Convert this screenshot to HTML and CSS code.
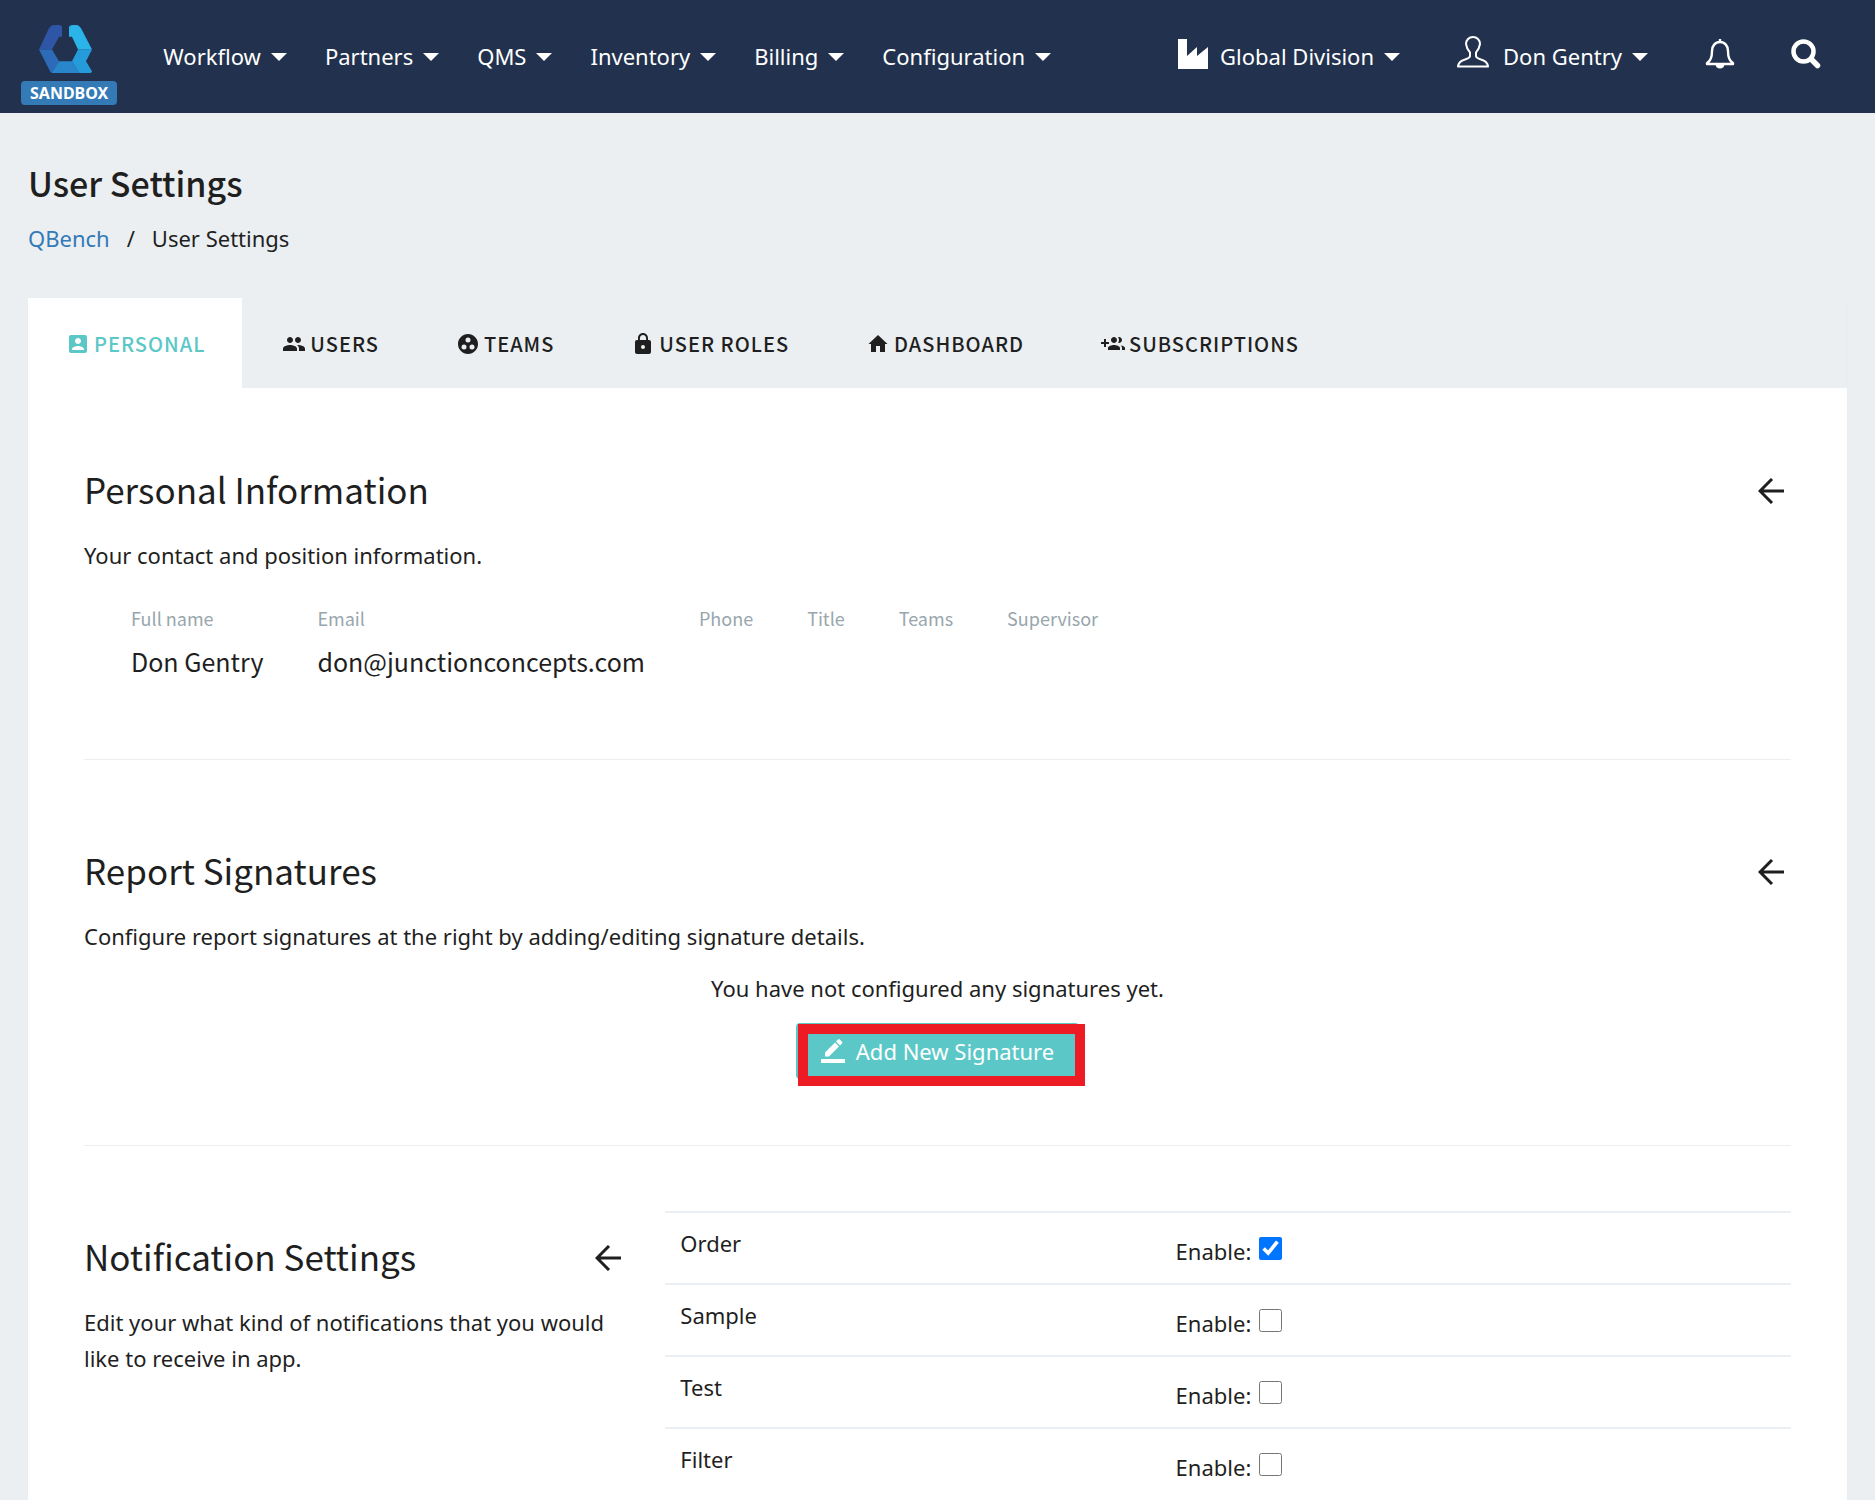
FILE: index.html
```html
<!DOCTYPE html>
<html lang="en">
<head>
<meta charset="utf-8">
<meta name="viewport" content="width=device-width, initial-scale=1">
<title>User Settings - QBench</title>
<link rel="stylesheet" href="styles.css">
</head>
<body>
<header class="topbar">
  <a class="brand" href="#" aria-label="QBench home">
    <svg class="brand-logo" viewBox="0 0 53 57" preserveAspectRatio="none" aria-hidden="true">
      <path fill="#2f56a6" d="M15 0h5q3 0 3 3v11h-3l-7 15H0L10 4q2-4 5-4z"/>
      <path fill="#2d6bb8" d="M0 29h13l7 14-6 14h-1q-1 0-2-2z"/>
      <path fill="#2a86cb" d="M20 43h13l7 14H13z"/>
      <path fill="#259bdb" d="M39 29h14l-6 14 6 12q0 2-2 2H40l-7-14z"/>
      <path fill="#2bb4ea" d="M30 3q0-3 4-3h3q3 0 5 4l11 25H39l-6-15h-3z"/>
    </svg>
    <span class="brand-badge">SANDBOX</span>
  </a>
  <nav class="menu" aria-label="Main">
    <button class="menu-item" type="button">Workflow<span class="caret"></span></button>
    <button class="menu-item" type="button">Partners<span class="caret"></span></button>
    <button class="menu-item" type="button">QMS<span class="caret"></span></button>
    <button class="menu-item" type="button">Inventory<span class="caret"></span></button>
    <button class="menu-item" type="button">Billing<span class="caret"></span></button>
    <button class="menu-item" type="button">Configuration<span class="caret"></span></button>
  </nav>
  <div class="tools">
    <button class="menu-item division" type="button">
      <svg class="tool-icon" viewBox="0 0 30 30" aria-hidden="true"><path fill="#fff" d="M0 0h9v17L19 8v9l11-9v22H0z"/></svg>
      Global Division<span class="caret"></span>
    </button>
    <button class="menu-item account" type="button">
      <svg class="tool-icon user-icon" viewBox="0 0 32 32" aria-hidden="true"><path fill="none" stroke="#fff" stroke-width="2" stroke-linejoin="round" d="M13 16.500C10.500 14 9.500 11 9 8c0-4 3-7 7-7s7 3 7 7c-.5 3-1.500 6-4 8.500V20c0 2 2 2.500 5 3.500 4 1 6.500 3 7 7H1c.5-4 3-6 7-7 3-1 5-1.500 5-3.500z"/></svg>
      Don Gentry<span class="caret"></span>
    </button>
    <button class="menu-item" type="button" aria-label="Notifications">
      <svg class="tool-icon" viewBox="0 0 30 30" aria-hidden="true"><path fill="none" stroke="#fff" stroke-width="2.400" stroke-linejoin="round" d="M15 0v3M15 3c-5 0-8 4-8 9 0 6-1 10-5 12v1h26v-1c-4-2-5-6-5-12 0-5-3-9-8-9z"/><path fill="#fff" d="M10.500 25h9c0 6-9 6-9 0z"/></svg>
    </button>
    <button class="menu-item search" type="button" aria-label="Search">
      <svg class="tool-icon" viewBox="0 0 30 30" aria-hidden="true"><circle cx="12.500" cy="12.500" r="10" fill="none" stroke="#fff" stroke-width="4.500"/><path stroke="#fff" stroke-width="5.500" stroke-linecap="round" d="M20.500 20.500l6 6"/></svg>
    </button>
  </div>
</header>

<main class="page">
  <h1 class="page-title">User Settings</h1>
  <nav class="breadcrumb" aria-label="Breadcrumb">
    <a href="#">QBench</a><span>/</span><span>User Settings</span>
  </nav>

  <div class="panel">
    <nav class="tabs" aria-label="Settings">
      <a class="tab tab-active" href="#" aria-current="page"><svg class="tab-icon" viewBox="0 0 24 24" aria-hidden="true"><path d="M3 5v14a2 2 0 0 0 2 2h14c1.100 0 2-.9 2-2V5a2 2 0 0 0-2-2H5a2 2 0 0 0-2 2zm12 4c0 1.660-1.340 3-3 3s-3-1.340-3-3 1.340-3 3-3 3 1.340 3 3zm-9 8c0-2 4-3.100 6-3.100s6 1.100 6 3.100v1H6v-1z"/></svg>PERSONAL</a>
      <a class="tab" href="#"><svg class="tab-icon" viewBox="0 0 24 24" aria-hidden="true"><path d="M16 11c1.660 0 2.990-1.340 2.990-3S17.660 5 16 5s-3 1.340-3 3 1.340 3 3 3zm-8 0c1.660 0 2.990-1.340 2.990-3S9.660 5 8 5 5 6.340 5 8s1.340 3 3 3zm0 2c-2.330 0-7 1.170-7 3.500V19h14v-2.500c0-2.330-4.670-3.500-7-3.500zm8 0c-.29 0-.62.020-.97.050 1.160.84 1.970 1.970 1.970 3.450V19h6v-2.500c0-2.330-4.670-3.500-7-3.500z"/></svg>USERS</a>
      <a class="tab" href="#"><svg class="tab-icon" viewBox="0 0 24 24" aria-hidden="true"><path d="M12 2C6.480 2 2 6.480 2 12s4.480 10 10 10 10-4.480 10-10S17.520 2 12 2zM8 17.500a2.500 2.500 0 0 1 0-5 2.500 2.500 0 0 1 0 5zM9.500 8a2.500 2.500 0 0 1 5 0 2.500 2.500 0 0 1-5 0zm6.500 9.500a2.500 2.500 0 0 1 0-5 2.500 2.500 0 0 1 0 5z"/></svg>TEAMS</a>
      <a class="tab" href="#"><svg class="tab-icon" viewBox="0 0 24 24" aria-hidden="true"><path d="M18 8h-1V6c0-2.760-2.240-5-5-5S7 3.240 7 6v2H6c-1.100 0-2 .9-2 2v10c0 1.100.9 2 2 2h12c1.100 0 2-.9 2-2V10c0-1.100-.9-2-2-2zm-6 9c-1.100 0-2-.9-2-2s.9-2 2-2 2 .9 2 2-.9 2-2 2zM15.100 8H8.900V6c0-1.710 1.390-3.100 3.100-3.100s3.100 1.390 3.100 3.100z"/></svg>USER ROLES</a>
      <a class="tab" href="#"><svg class="tab-icon" viewBox="0 0 24 24" aria-hidden="true"><path d="M12 3L2.500 12H5v8h5v-6h4v6h5v-8h2.500z"/></svg>DASHBOARD</a>
      <a class="tab" href="#"><svg class="tab-icon" viewBox="0 0 24 24" aria-hidden="true"><path d="M8 10H5V7H3v3H0v2h3v3h2v-3h3zm10 1c1.660 0 2.990-1.340 2.990-3S19.660 5 18 5c-.32 0-.63.050-.91.140.57.810.9 1.790.9 2.860s-.34 2.040-.9 2.860c.28.090.59.140.91.140zm-5 0c1.660 0 2.990-1.340 2.990-3S14.660 5 13 5s-3 1.340-3 3 1.340 3 3 3zm6.620 2.160c.83.730 1.380 1.660 1.380 2.840v2h3v-2c0-1.540-2.370-2.490-4.380-2.840zM13 13c-2 0-6 1-6 3v2h12v-2c0-2-4-3-6-3z"/></svg>SUBSCRIPTIONS</a>
    </nav>

    <section class="section section-first">
      <div class="section-head">
        <h2>Personal Information</h2>
        <button class="collapse" type="button" aria-label="Collapse personal information"><svg viewBox="0 0 26 26" aria-hidden="true"><path d="M26 13H3M14 1L2 13l12 12"/></svg></button>
      </div>
      <p>Your contact and position information.</p>
      <table class="profile">
        <thead><tr><th>Full name</th><th>Email</th><th>Phone</th><th>Title</th><th>Teams</th><th>Supervisor</th></tr></thead>
        <tbody><tr><td>Don Gentry</td><td>don@junctionconcepts.com</td><td></td><td></td><td></td><td></td></tr></tbody>
      </table>
    </section>

    <section class="section section-signatures">
      <div class="section-head">
        <h2>Report Signatures</h2>
        <button class="collapse" type="button" aria-label="Collapse report signatures"><svg viewBox="0 0 26 26" aria-hidden="true"><path d="M26 13H3M14 1L2 13l12 12"/></svg></button>
      </div>
      <p>Configure report signatures at the right by adding/editing signature details.</p>
      <div class="empty">
        <p>You have not configured any signatures yet.</p>
        <div class="callout">
          <button class="add-button" type="button"><svg viewBox="0 0 24 24" aria-hidden="true"><path d="M0 20h24v4H0zM4 17.500v-4L14 3.500l4 4L8 17.500zM15 2.500L17 .5a1.300 1.300 0 0 1 1.800 0l2.200 2.200a1.300 1.300 0 0 1 0 1.800l-2 2z"/></svg>Add New Signature</button>
        </div>
      </div>
    </section>

    <section class="section section-notify">
      <div class="notify-intro">
        <div class="section-head">
          <h2>Notification Settings</h2>
          <button class="collapse" type="button" aria-label="Collapse notification settings"><svg viewBox="0 0 26 26" aria-hidden="true"><path d="M26 13H3M14 1L2 13l12 12"/></svg></button>
        </div>
        <p>Edit your what kind of notifications that you would like to receive in app.</p>
      </div>
      <table class="notify-table">
        <tbody>
          <tr><td>Order</td><td><label for="n-order">Enable:</label><input id="n-order" type="checkbox" checked></td></tr>
          <tr><td>Sample</td><td><label for="n-sample">Enable:</label><input id="n-sample" type="checkbox"></td></tr>
          <tr><td>Test</td><td><label for="n-test">Enable:</label><input id="n-test" type="checkbox"></td></tr>
          <tr><td>Filter</td><td><label for="n-filter">Enable:</label><input id="n-filter" type="checkbox"></td></tr>
        </tbody>
      </table>
    </section>
  </div>
</main>
</body>
</html>
```
FILE: styles.css
```css
* {
  box-sizing: border-box;
}

body {
  margin: 0;
  min-height: 100vh;
  display: flex;
  flex-direction: column;
  background: #ebeff2;
  color: #1f1f1f;
  font-family: "Noto Sans", sans-serif;
  font-size: 22px;
  line-height: 36px;
}

h1, h2, p {
  margin: 0;
}

button {
  border: 0;
  padding: 0;
  background: none;
  color: inherit;
  font: inherit;
  cursor: pointer;
}

/* Top bar */
.topbar {
  display: flex;
  align-items: center;
  height: 113px;
  padding: 0 54px 2px 21px;
  background: #22324e;
  color: #fff;
}

.brand {
  display: flex;
  flex-direction: column;
  align-items: center;
  gap: 8px;
  margin-right: 46px;
  padding-top: 19px;
  color: #fff;
  text-decoration: none;
}

.brand-logo {
  width: 53px;
  height: 48px;
  margin-right: 8px;
}

.brand-badge {
  padding: 0 9px;
  border-radius: 4px;
  background: #337ab7;
  font-size: 16px;
  font-weight: 700;
  line-height: 24px;
}

.menu,
.tools {
  display: flex;
  align-items: center;
}

.menu {
  gap: 38px;
}

.tools {
  margin-left: auto;
}

.menu-item {
  display: flex;
  align-items: center;
  white-space: nowrap;
}

.caret {
  margin: 3px 0 0 10px;
  border: 8px solid transparent;
  border-top-color: #fff;
  border-bottom: 0;
}

.tool-icon {
  width: 30px;
  height: 30px;
  margin-bottom: 4px;
}

.division .tool-icon {
  margin-right: 12px;
}

.account {
  margin: 0 57px;
}

.account .user-icon {
  width: 32px;
  height: 32px;
  margin: 0 14px 8px 0;
}

.search {
  margin-left: 56px;
}

/* Page heading */
.page {
  flex: 1;
  display: flex;
  flex-direction: column;
  padding: 47px 28px 0;
}

.page-title {
  font-family: "Noto Sans CJK SC", "Noto Sans", sans-serif;
  font-size: 34px;
  font-weight: 500;
  line-height: 46px;
}

.breadcrumb {
  display: flex;
  gap: 17px;
  margin: 14px 0 42px;
}

.breadcrumb a {
  color: #337ab7;
  text-decoration: none;
}

/* Panel and tabs */
.panel {
  flex: 1;
  background: #fff;
  box-shadow: 0 1px 1px rgba(0, 0, 0, 0.05);
}

.tabs {
  display: flex;
  gap: 2px;
  background: #ebeff2;
}

.tab {
  display: flex;
  align-items: center;
  gap: 4px;
  height: 90px;
  padding: 2px 37px 0 38px;
  color: #1f1f1f;
  font-family: "Noto Sans CJK SC", "Noto Sans", sans-serif;
  font-size: 20px;
  font-weight: 500;
  letter-spacing: 1px;
  text-decoration: none;
}

.tab-active {
  background: #fff;
  color: #5bc8c7;
}

.tab-icon {
  width: 24px;
  height: 24px;
  fill: currentColor;
}

/* Sections */
.section {
  margin: 0 56px;
  border-bottom: 1px solid #eee;
}

.section-first {
  padding: 75px 0 80px;
}

.section-head {
  display: flex;
  align-items: center;
  justify-content: space-between;
  margin-bottom: 22px;
}

.section-head h2 {
  font-family: "Noto Sans CJK SC", "Noto Sans", sans-serif;
  font-size: 35px;
  font-weight: 400;
  line-height: 52px;
}

.collapse {
  display: flex;
  padding: 4px 7px 0;
}

.collapse svg {
  width: 26px;
  height: 26px;
  fill: none;
  stroke: #1f1f1f;
  stroke-width: 3;
}

.profile {
  margin: 31px 0 0 20px;
  border-collapse: collapse;
  font-family: "Noto Sans CJK SC", "Noto Sans", sans-serif;
  text-align: left;
}

.profile th {
  padding: 0 27px 11px;
  color: #98a6ad;
  font-size: 18px;
  font-weight: 400;
  line-height: 28px;
}

.profile td {
  padding: 0 27px;
  font-size: 25px;
}

.section-signatures {
  padding: 84px 0 66px;
}

.empty {
  display: flex;
  flex-direction: column;
  align-items: center;
  gap: 17px;
  margin-top: 16px;
}

.callout {
  position: relative;
}

/* Red frame that points out the button */
.callout::after {
  content: "";
  position: absolute;
  inset: 1px -6px -7px 2px;
  border: 10px solid #ed1c24;
  pointer-events: none;
}

.add-button {
  display: flex;
  align-items: center;
  gap: 11px;
  height: 56px;
  padding: 0 25px;
  border-radius: 4px;
  background: #5bc8c7;
  color: #fff;
}

.add-button svg {
  width: 24px;
  height: 24px;
  fill: #fff;
}

.section-notify {
  display: grid;
  grid-template-columns: repeat(12, 1fr);
  gap: 37px;
  padding-top: 65px;
  border-bottom: 0;
}

.notify-intro {
  grid-column: span 4;
  padding-top: 19px;
}

.notify-table {
  grid-column: span 8;
  align-self: start;
  width: 100%;
  border-collapse: separate;
  border-spacing: 0;
}

.notify-table td {
  height: 72px;
  padding: 12px 15px 0;
  border-top: 2px solid #ebeff2;
  vertical-align: top;
}

.notify-table td:first-child {
  width: 44%;
}

.notify-table td:last-child {
  padding-top: 20px;
}

.notify-table input {
  width: 23px;
  height: 23px;
  margin: 0 0 4px 8px;
}
```
